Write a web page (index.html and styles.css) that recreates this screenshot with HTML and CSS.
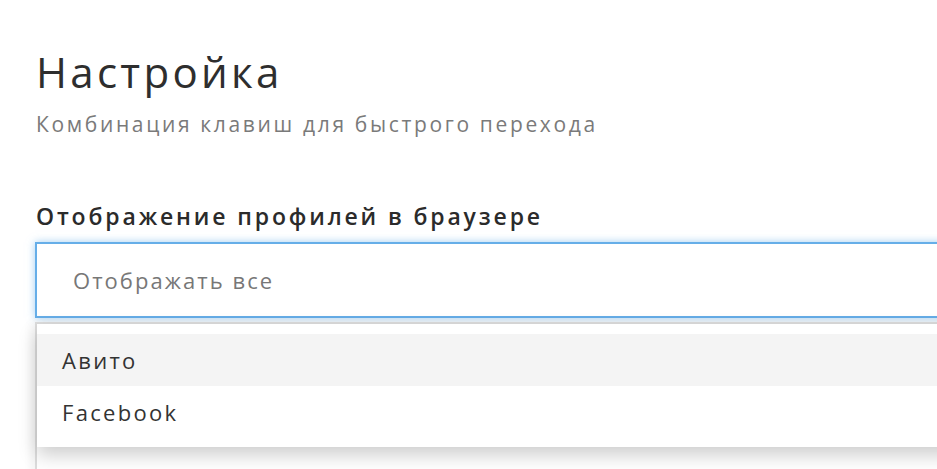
FILE: index.html
```html
<!DOCTYPE html>
<html lang="ru">
<head>
<meta charset="utf-8">
<title>Настройка</title>
<link rel="stylesheet" href="styles.css">
</head>
<body>
<main class="page">
  <h1 class="title">Настройка</h1>
  <p class="subtitle">Комбинация клавиш для быстрого перехода</p>
  <label class="label" for="profiles">Отображение профилей в браузере</label>
  <div class="select">
    <div class="select-input" id="profiles">Отображать все</div>
    <div class="dropdown">
      <ul class="menu">
        <li class="option active">Авито</li>
        <li class="option">Facebook</li>
      </ul>
    </div>
  </div>
</main>
</body>
</html>
```

FILE: styles.css
```css
html, body {
  margin: 0;
  padding: 0;
  background: #fff;
  overflow: hidden;
  height: 100%;
}
body {
  font-family: "Open Sans", "Noto Sans", sans-serif;
  color: #333;
}
.page {
  padding: 47px 0 0 36px;
}
.title {
  margin: 0;
  font-size: 42px;
  line-height: 50px;
  font-weight: 400;
  letter-spacing: 3.3px;
  color: #2e2e2e;
}
.subtitle {
  margin: 15px 0 0;
  font-size: 21px;
  line-height: 24px;
  font-weight: 400;
  letter-spacing: 2.65px;
  color: #7a7a7a;
}
.label {
  display: block;
  margin-top: 67px;
  font-size: 23px;
  line-height: 26px;
  font-weight: 600;
  letter-spacing: 2.85px;
  color: #2b2b2b;
}
.select {
  margin: 13px 0 0 -1px;
  width: 1000px;
}
.select-input {
  box-sizing: border-box;
  height: 76px;
  border: 2px solid #66aee8;
  padding-left: 36px;
  display: flex;
  align-items: center;
  font-size: 22px;
  letter-spacing: 2.05px;
  color: #777;
  box-shadow: 0 0 8px rgba(102, 175, 233, 0.6);
}
.dropdown {
  margin-top: 4px;
  height: 200px;
  border-top: 2px solid #dcdcdc;
  border-left: 2px solid #dcdcdc;
  box-shadow: -3px 0 10px rgba(0, 0, 0, 0.05);
}
.menu {
  list-style: none;
  margin: 0;
  padding: 10px 0 9px;
  background: #fff;
  box-shadow: 0 8px 18px rgba(0, 0, 0, 0.2);
}
.option {
  height: 52px;
  display: flex;
  align-items: center;
  padding-left: 25px;
  font-size: 22px;
  letter-spacing: 2.3px;
  color: #333;
}
.option.active {
  background: #f4f4f4;
}
```
